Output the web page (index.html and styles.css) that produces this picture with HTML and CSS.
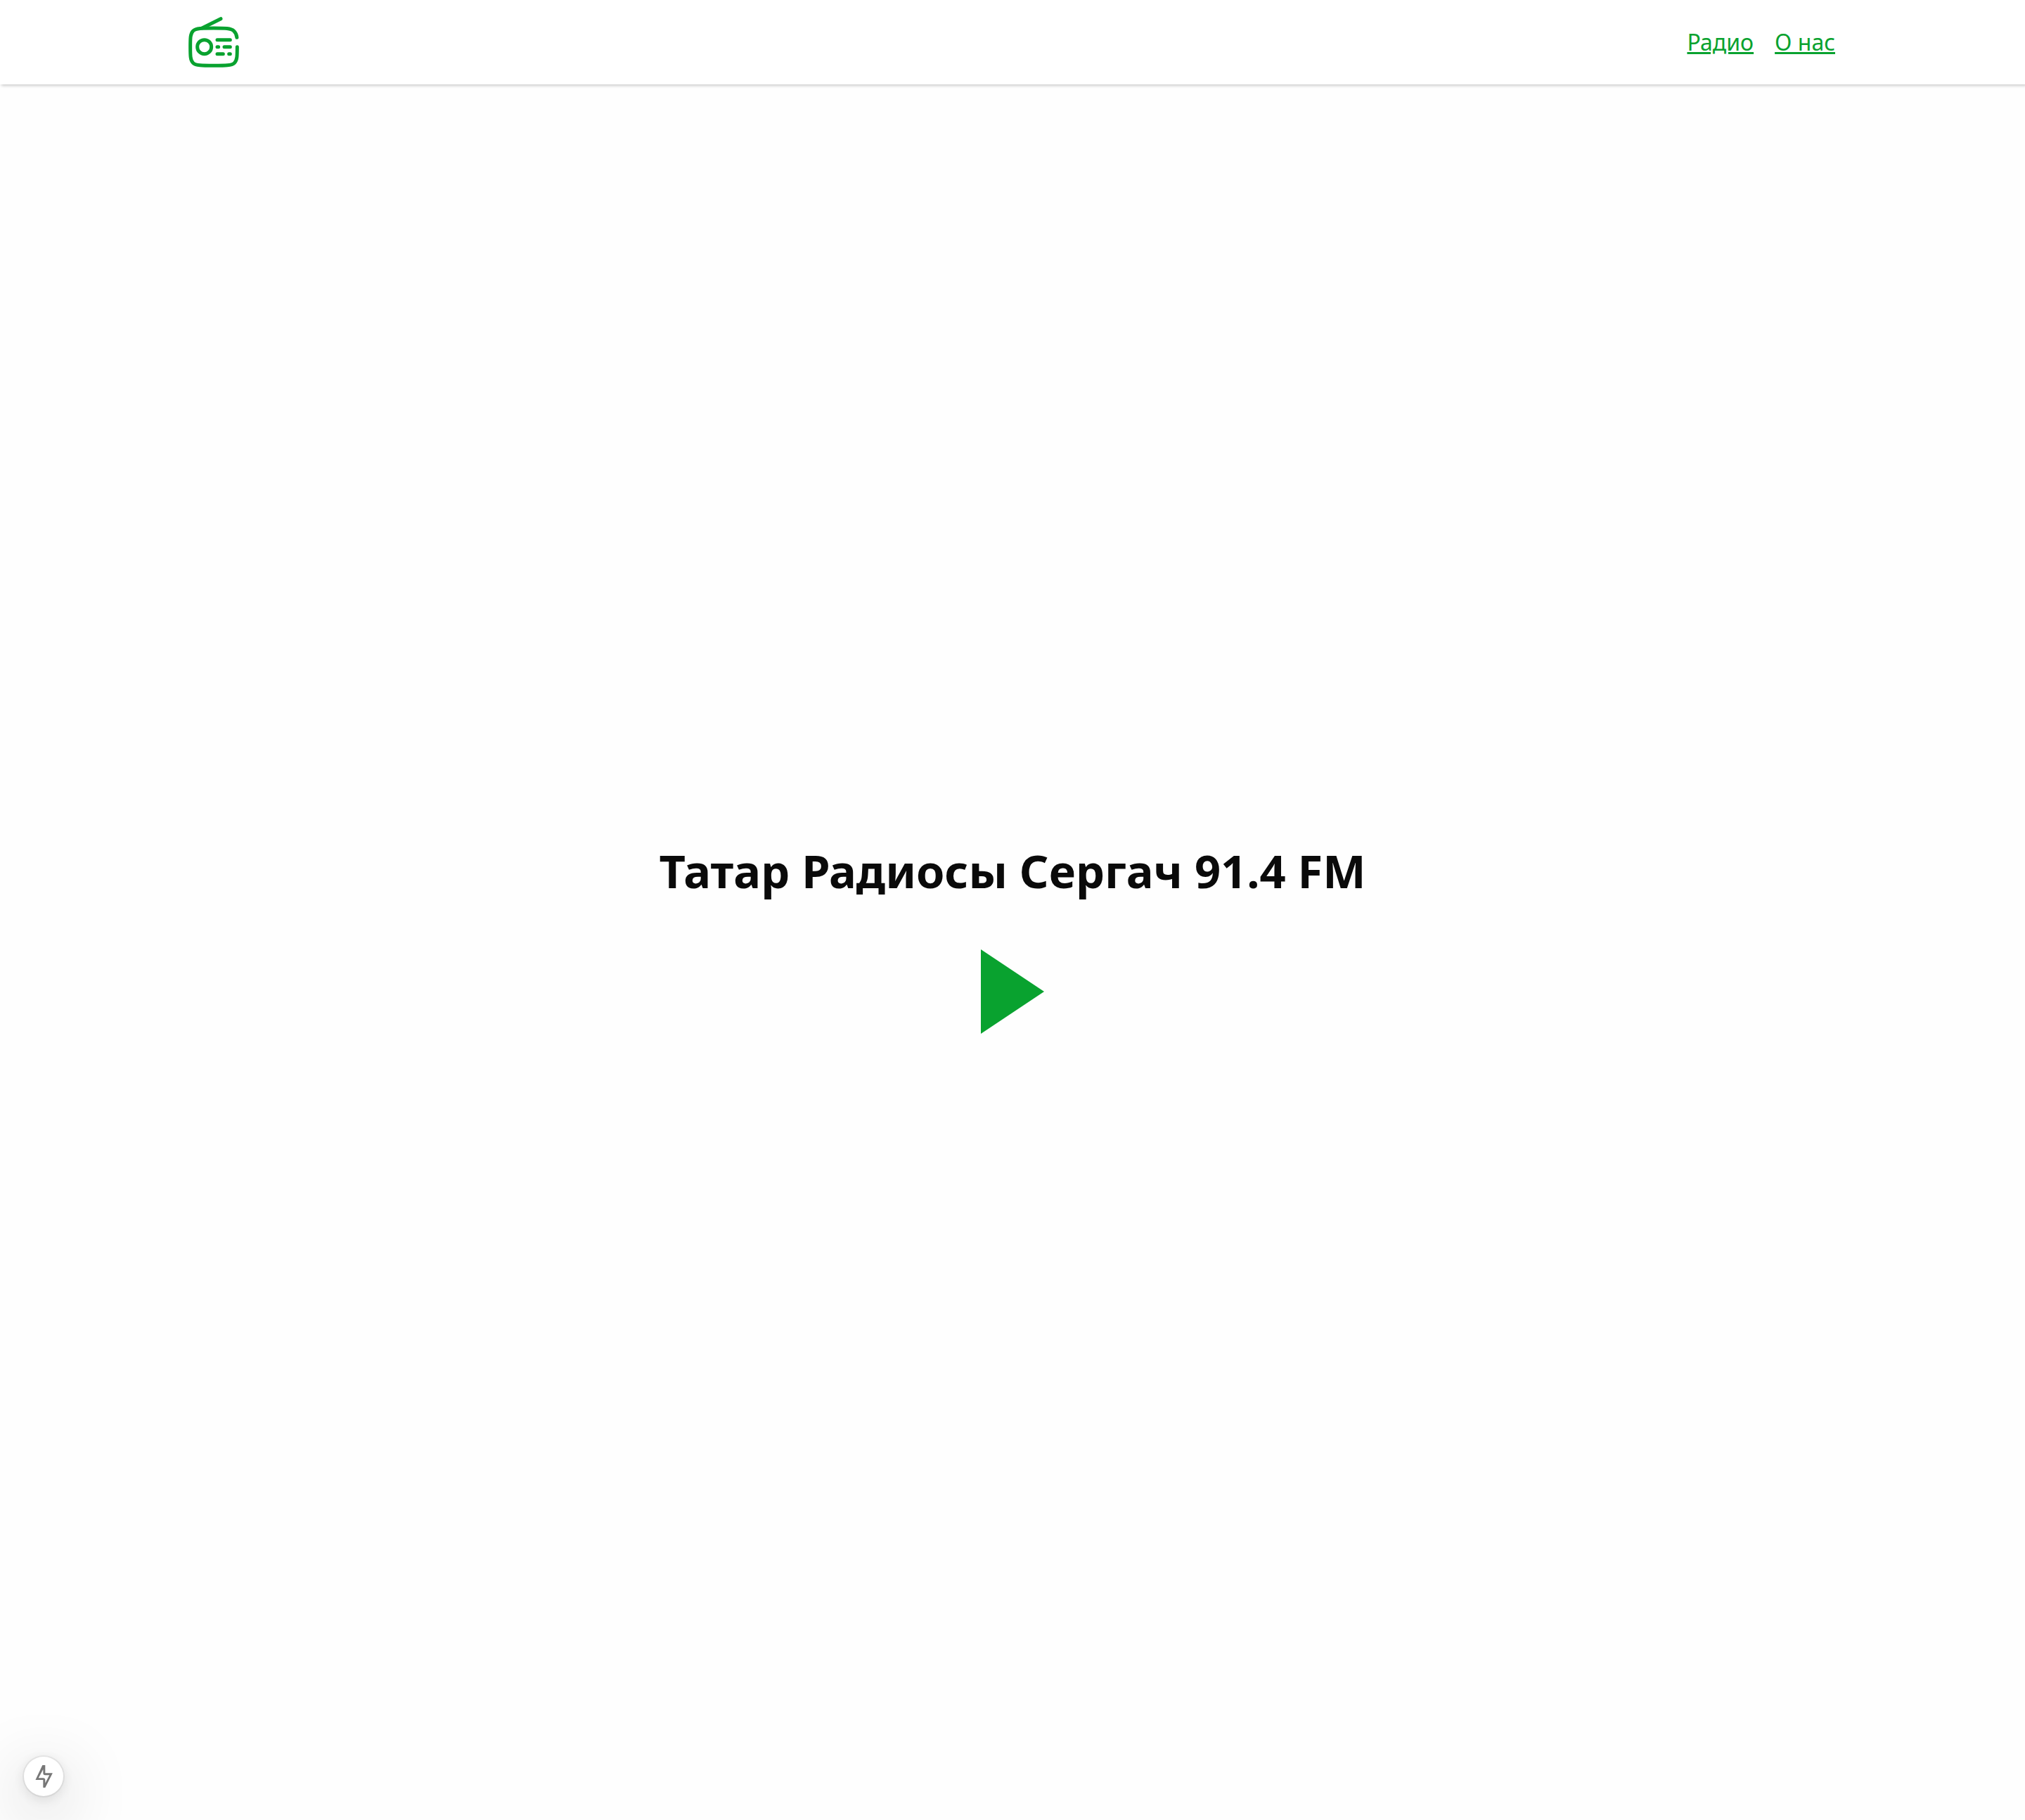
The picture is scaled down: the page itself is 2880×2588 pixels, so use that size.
FILE: index.html
```html
<!DOCTYPE html>
<html lang="ru">
<head>
<meta charset="utf-8">
<meta name="viewport" content="width=device-width, initial-scale=1">
<title>Татар Радиосы Сергач 91.4 FM</title>
<link rel="stylesheet" href="styles.css">
</head>
<body class="page">
<header class="header">
  <a class="logo" href="#" aria-label="Главная">
    <svg class="logo-icon" viewBox="0 0 24 24" fill="none" stroke="currentColor" stroke-width="1.5" stroke-linecap="round" aria-hidden="true">
      <path d="M22 14C22 17.771 22 19.657 20.828 20.828C19.657 22 17 22 12 22C7 22 4.343 22 3.172 20.828C2 19.657 2 17.771 2 14C2 10.229 2 8.343 3.172 7.172C4.343 6 7 6 12 6C17 6 19.3 6 20.535 7.172C21.352 7.9 21.713 8.7 21.873 10"/>
      <path d="M7 6L15 2"/>
      <circle cx="8" cy="14" r="3"/>
      <path d="M13.5 11H19M13.5 14H14M16.5 14H19M13.5 17H16M18.5 17H19"/>
    </svg>
  </a>
  <nav class="nav">
    <a class="nav-link" href="#">Радио</a>
    <a class="nav-link" href="#">О нас</a>
  </nav>
</header>
<main class="main">
  <h1 class="title">Татар Радиосы Сергач 91.4 FM</h1>
  <button class="play" type="button" aria-label="Слушать"></button>
</main>
<button class="indicator" type="button" aria-label="Static route">
  <svg class="indicator-icon" viewBox="88 89 75 97" fill="currentColor" fill-rule="evenodd" aria-hidden="true">
    <path d="M119 89H131V123H163L131 186H122V153H89ZM122 107L102 144H122Q131 144 131 153V166L149 132H131Q122 132 122 123Z"/>
  </svg>
</button>
</body>
</html>
```
FILE: styles.css
```css
* {
  box-sizing: border-box;
}

.page {
  margin: 0;
  min-height: 100vh;
  display: flex;
  flex-direction: column;
  background: #fefefe;
  color: #0a0a0a;
  font-family: "Noto Sans", sans-serif;
}

.header {
  display: flex;
  align-items: center;
  justify-content: space-between;
  padding: 20px 270px 20px 264px;
  background: #fff;
  box-shadow: 2px 2px 4px rgba(0, 0, 0, 0.2);
}

.logo {
  display: flex;
  color: #09a22f;
}

.logo-icon {
  width: 80px;
  height: 80px;
}

.nav {
  display: flex;
  gap: 30px;
}

.nav-link {
  color: #09a22f;
  font-size: 32px;
  line-height: 44px;
}

.main {
  flex: 1;
  display: flex;
  flex-direction: column;
  align-items: center;
  justify-content: center;
  gap: 68px;
  padding-bottom: 44px;
}

.title {
  margin: 0;
  font-size: 65px;
  line-height: 88px;
  font-weight: 700;
  text-align: center;
}

.play {
  width: 90px;
  height: 120px;
  padding: 0;
  border: 0;
  background: #09a22f;
  clip-path: polygon(0 0, 100% 50%, 0 100%);
  cursor: pointer;
}

.indicator {
  position: fixed;
  left: 34px;
  bottom: 34px;
  width: 56px;
  height: 56px;
  display: flex;
  align-items: center;
  justify-content: center;
  padding: 0;
  border: 0;
  border-radius: 50%;
  background: #fff;
  color: #777;
  box-shadow: 0 0 0 2px rgba(0, 0, 0, 0.06), 0 24px 96px rgba(0, 0, 0, 0.28), 0 4px 20px rgba(0, 0, 0, 0.12);
}

.indicator-icon {
  width: 25px;
  height: 32px;
}
```
